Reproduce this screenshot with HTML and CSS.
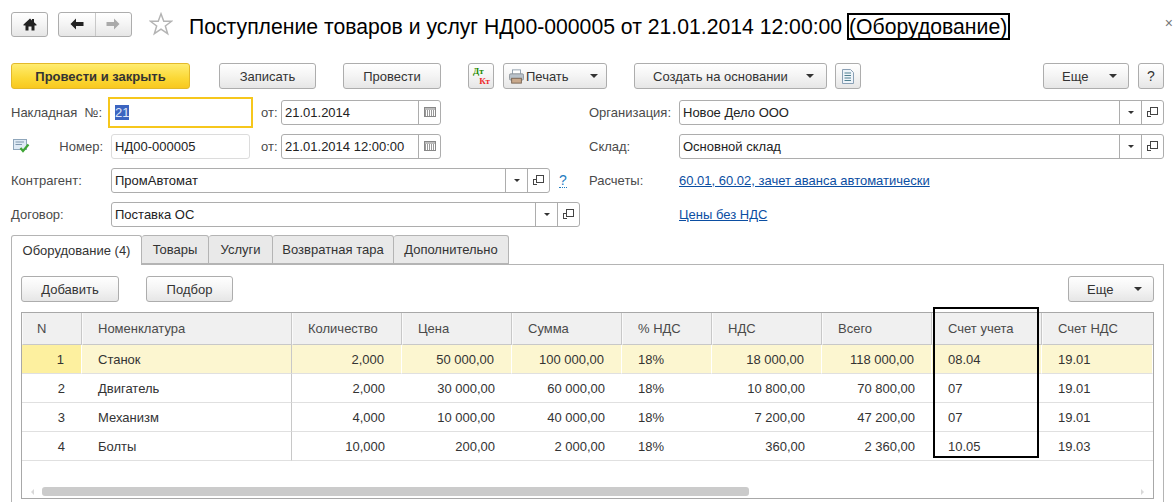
FILE: index.html
```html
<!DOCTYPE html>
<html lang="ru">

<head>
    <meta charset="UTF-8">
    <title>Поступление товаров и услуг</title>
    <link rel="stylesheet" href="styles.css">
</head>

<body>
    <header class="title-bar">
        <button class="btn nav-home">
            <svg width="14" height="13" viewBox="0 0 14 13"><path d="M7 0.5L0.5 6.5V7.5H2.5V12.5H5.5V8.5H8.5V12.5H11.5V7.5H13.5V6.5L11 4.2V1H9V2.4Z" fill="#222"/></svg>
        </button>
        <div class="btn nav-pair">
            <span class="nav-part">
                <svg width="14" height="12" viewBox="0 0 14 12"><path d="M6 0.5L0.5 6L6 11.5V8H13.5V4H6Z" fill="#222"/></svg>
            </span>
            <span class="nav-part nav-next">
                <svg width="14" height="12" viewBox="0 0 14 12"><path d="M8 0.5L13.5 6L8 11.5V8H0.5V4H8Z" fill="#aaa"/></svg>
            </span>
        </div>
        <svg class="star" width="24" height="24" viewBox="0 0 26 26"><path d="M13 2L16 10H24.5L17.7 15.2L20.2 23.5L13 18.5L5.8 23.5L8.3 15.2L1.5 10H10Z" fill="#fff" stroke="#b4b4b4" stroke-width="1.6"/></svg>
        <h1 class="title">Поступление товаров и услуг НД00-000005 от 21.01.2014 12:00:00 <span class="title-mark">(Оборудование)</span></h1>
        <span class="close">×</span>
    </header>

    <div class="toolbar">
        <button class="btn btn-main">Провести и закрыть</button>
        <button class="btn btn-write">Записать</button>
        <button class="btn btn-post">Провести</button>
        <button class="btn btn-dtkt"><span class="dt">Дт</span><span class="kt">Кт</span></button>
        <button class="btn btn-print">
            <svg width="15" height="15" viewBox="0 0 17 16"><rect x="4" y="0.5" width="9" height="5" fill="#fff" stroke="#8a9aa8"/><rect x="0.5" y="5" width="16" height="7" rx="1.5" fill="#b9c2ca" stroke="#8a8f94"/><rect x="3" y="10" width="11" height="5.5" fill="#c9a98c" stroke="#75604f"/></svg>
            <span class="btn-text">Печать</span><i class="arrow"></i>
        </button>
        <button class="btn btn-create">Создать на основании<i class="arrow"></i></button>
        <button class="btn btn-doc">
            <svg width="12" height="15" viewBox="0 0 12 15"><path d="M0.5 0.5H8.5L11.5 3.5V14.5H0.5Z" fill="#eef4fa" stroke="#8aa0b5"/><path d="M2.5 4H9M2.5 6.5H9M2.5 9H9M2.5 11.5H9" stroke="#4f7f8f" stroke-width="1.2"/></svg>
        </button>
        <button class="btn btn-more">Еще<i class="arrow"></i></button>
        <button class="btn btn-help">?</button>
    </div>

    <div class="form">
        <div class="form-row">
            <div class="form-left">
                <label class="label label-inv">Накладная&nbsp; №:</label>
                <span class="field field-active"><span class="selected">21</span></span>
                <label class="label label-from">от:</label>
                <span class="field field-date"><span class="field-text">21.01.2014</span><span class="cell cell-cal"><i class="cal"></i></span></span>
            </div>
            <div class="form-right">
                <label class="label label-right">Организация:</label>
                <span class="field field-wide"><span class="field-text">Новое Дело ООО</span><span class="cell"><i class="arrow arrow-small"></i></span><span class="cell"><i class="open"></i></span></span>
            </div>
        </div>
        <div class="form-row">
            <div class="form-left">
                <svg class="doc-ok" width="17" height="14" viewBox="0 0 17 14"><rect x="0.5" y="0.5" width="13" height="10" fill="#dfeaf5" stroke="#8fa6bb"/><path d="M2.5 3H11M2.5 5.5H9" stroke="#7f97ad"/><path d="M7.5 9L10 12L15.5 5.5" fill="none" stroke="#3fa535" stroke-width="2.2"/></svg>
                <label class="label label-num">Номер:</label>
                <span class="field field-num"><span class="field-text">НД00-000005</span></span>
                <label class="label label-from">от:</label>
                <span class="field field-date"><span class="field-text">21.01.2014 12:00:00</span><span class="cell cell-cal"><i class="cal"></i></span></span>
            </div>
            <div class="form-right">
                <label class="label label-right">Склад:</label>
                <span class="field field-wide"><span class="field-text">Основной склад</span><span class="cell"><i class="arrow arrow-small"></i></span><span class="cell"><i class="open"></i></span></span>
            </div>
        </div>
        <div class="form-row">
            <div class="form-left">
                <label class="label label-long">Контрагент:</label>
                <span class="field field-partner"><span class="field-text">ПромАвтомат</span><span class="cell"><i class="arrow arrow-small"></i></span><span class="cell"><i class="open"></i></span></span>
                <a class="hint">?</a>
            </div>
            <div class="form-right">
                <label class="label label-right">Расчеты:</label>
                <a class="link">60.01, 60.02, зачет аванса автоматически</a>
            </div>
        </div>
        <div class="form-row">
            <div class="form-left">
                <label class="label label-long">Договор:</label>
                <span class="field field-contract"><span class="field-text">Поставка ОС</span><span class="cell"><i class="arrow arrow-small"></i></span><span class="cell"><i class="open"></i></span></span>
            </div>
            <div class="form-right">
                <span class="label label-right"></span>
                <a class="link">Цены без НДС</a>
            </div>
        </div>
    </div>

    <div class="tabs">
        <span class="tab tab-active">Оборудование (4)</span>
        <span class="tab tab-goods">Товары</span>
        <span class="tab tab-serv">Услуги</span>
        <span class="tab tab-tara">Возвратная тара</span>
        <span class="tab tab-extra">Дополнительно</span>
    </div>

    <div class="panel">
        <div class="panel-bar">
            <button class="btn btn-add">Добавить</button>
            <button class="btn btn-pick">Подбор</button>
            <button class="btn btn-more btn-more-table">Еще<i class="arrow"></i></button>
        </div>
        <div class="grid-wrap">
            <table class="grid">
                <colgroup>
                    <col class="c-n"><col class="c-name"><col class="c-110"><col class="c-110"><col class="c-110">
                    <col class="c-vat"><col class="c-110"><col class="c-110"><col class="c-110"><col>
                </colgroup>
                <thead>
                    <tr>
                        <th class="th-n">N</th><th>Номенклатура</th><th>Количество</th><th>Цена</th><th>Сумма</th>
                        <th>% НДС</th><th>НДС</th><th>Всего</th><th>Счет учета</th><th>Счет НДС</th>
                    </tr>
                </thead>
                <tbody>
                    <tr class="row-current">
                        <td class="num-n">1</td><td class="sep">Станок</td><td class="num">2,000</td><td class="num">50 000,00</td><td class="num">100 000,00</td>
                        <td>18%</td><td class="num">18 000,00</td><td class="num">118 000,00</td><td>08.04</td><td>19.01</td>
                    </tr>
                    <tr>
                        <td class="num-n">2</td><td class="sep">Двигатель</td><td class="num">2,000</td><td class="num">30 000,00</td><td class="num">60 000,00</td>
                        <td>18%</td><td class="num">10 800,00</td><td class="num">70 800,00</td><td>07</td><td>19.01</td>
                    </tr>
                    <tr>
                        <td class="num-n">3</td><td class="sep">Механизм</td><td class="num">4,000</td><td class="num">10 000,00</td><td class="num">40 000,00</td>
                        <td>18%</td><td class="num">7 200,00</td><td class="num">47 200,00</td><td>07</td><td>19.01</td>
                    </tr>
                    <tr>
                        <td class="num-n">4</td><td class="sep">Болты</td><td class="num">10,000</td><td class="num">200,00</td><td class="num">2 000,00</td>
                        <td>18%</td><td class="num">360,00</td><td class="num">2 360,00</td><td>10.05</td><td>19.03</td>
                    </tr>
                </tbody>
            </table>
            <div class="scroll">
                <i class="scroll-left"></i>
                <div class="scroll-thumb"></div>
                <i class="scroll-right"></i>
            </div>
            <div class="column-mark"></div>
        </div>
    </div>
</body>

</html>
```

FILE: styles.css
```css
html,
body {
    height: 502px;
    overflow: hidden;
}

body {
    margin: 0;
    background: #fff;
    color: #333;
    font-family: 'Liberation Sans', Arial, sans-serif;
    font-size: 13px;
}

button {
    font-family: inherit;
    font-size: 13px;
    color: #333;
    padding: 0;
}

.btn {
    height: 26px;
    display: flex;
    align-items: center;
    justify-content: center;
    box-sizing: border-box;
    background: linear-gradient(#ffffff 0%, #f4f4f4 50%, #e6e6e6 100%);
    border: 1px solid #adadad;
    border-radius: 3px;
    flex: none;
}

.arrow {
    width: 0;
    height: 0;
    border-left: 4px solid transparent;
    border-right: 4px solid transparent;
    border-top: 4px solid #333;
    display: block;
}

.arrow-small {
    border-left-width: 3.5px;
    border-right-width: 3.5px;
    border-top-width: 3px;
}

/* title */
.title-bar {
    height: 24px;
    padding: 12px 0 0 11px;
    display: flex;
    align-items: center;
    position: relative;
}

.nav-home {
    width: 37px;
    height: 25px;
}

.nav-pair {
    width: 74px;
    height: 25px;
    margin-left: 10px;
}

.nav-part {
    flex: 1;
    height: 100%;
    display: flex;
    align-items: center;
    justify-content: center;
}

.nav-next {
    border-left: 1px solid #c8c8c8;
}

.star {
    margin-left: 17px;
    flex: none;
}

.title {
    margin: 5px 0 0 16px;
    font-size: 21.2px;
    font-weight: normal;
    color: #000;
    white-space: nowrap;
}

.title-mark {
    border: 2px solid #000;
    margin-left: -1px;
    padding: 0 1px 0 0;
}

.close {
    position: absolute;
    right: 1px;
    top: 15px;
    color: #777;
    font-size: 14px;
}

/* toolbar */
.toolbar {
    display: flex;
    align-items: center;
    margin-top: 27px;
    padding-left: 11px;
}

.btn-main {
    width: 179px;
    font-weight: bold;
    border-color: #e3b92b;
    background: linear-gradient(#ffec70 0%, #fbd835 60%, #f8c81f 100%);
}

.btn-write {
    width: 97px;
    margin-left: 29px;
}

.btn-post {
    width: 98px;
    margin-left: 27px;
}

.btn-dtkt {
    width: 26px;
    margin-left: 27px;
    flex-direction: column;
    font-size: 9px;
    font-weight: bold;
    line-height: 10.5px;
    font-family: 'Liberation Serif', serif;
}

.dt {
    color: #1f8a00;
    align-self: flex-start;
    margin-left: 4px;
}

.kt {
    color: #ee2b2b;
    align-self: flex-end;
    margin-right: 3px;
}

.btn-print {
    width: 104px;
    margin-left: 9px;
    justify-content: flex-start;
    padding-left: 5px;
}

.btn-text {
    margin-left: 2px;
}

.btn-print .arrow {
    margin-left: 21px;
}

.btn-create {
    width: 193px;
    margin-left: 27px;
    justify-content: flex-start;
    padding-left: 18px;
}

.btn-create .arrow {
    margin-left: 18px;
}

.btn-doc {
    width: 26px;
    margin-left: 8px;
}

.btn-more {
    width: 86px;
    margin-left: 182px;
    justify-content: flex-start;
    padding-left: 18px;
}

.btn-more .arrow {
    margin-left: 21px;
}

.btn-help {
    width: 26px;
    margin-left: 9px;
    font-size: 14px;
}

/* form */
.form {
    margin-top: 6px;
    padding-left: 11px;
}

.form-row {
    height: 34px;
    display: flex;
    align-items: center;
}

.form-left {
    width: 578px;
    display: flex;
    align-items: center;
    flex: none;
}

.form-right {
    display: flex;
    align-items: center;
}

.label {
    color: #4a4a4a;
    white-space: nowrap;
    flex: none;
}

.label-inv {
    width: 97px;
}

.label-num {
    width: 51px;
    margin-left: 22px;
    text-align: right;
    margin-right: 8px;
}

.doc-ok {
    margin-left: 2px;
    flex: none;
}

.label-long {
    width: 100px;
}

.label-from {
    width: 20px;
    margin-left: 8px;
    margin-right: 0;
}

.label-right {
    width: 90px;
}

.field {
    height: 25px;
    box-sizing: border-box;
    display: flex;
    align-items: center;
    background: #fff;
    border: 1px solid #adadad;
    border-radius: 3px;
    flex: none;
    color: #222;
}

.field-text {
    flex: 1;
    padding-left: 3px;
    white-space: nowrap;
    overflow: hidden;
}

.field-active {
    width: 145px;
    height: 31px;
    border: 2px solid #f6c71c;
    border-radius: 0;
    padding-left: 5px;
}

.selected {
    background: #3c64c0;
    color: #dfe6f7;
    line-height: 15px;
}

.field-date {
    width: 160px;
}

.field-num {
    width: 139px;
    margin-right: 3px;
    border-color: #dcdcdc;
}

.field-wide {
    width: 485px;
}

.field-partner {
    width: 439px;
}

.field-contract {
    width: 469px;
}

.cell {
    width: 21px;
    height: 100%;
    display: flex;
    align-items: center;
    justify-content: center;
    border-left: 1px solid #adadad;
    flex: none;
}

.cal {
    width: 10px;
    height: 8px;
    border: 1px solid #888;
    background: repeating-linear-gradient(90deg, #999 0 1px, #fff 1px 2px);
    box-shadow: inset 0 2px 0 #bbb;
}

.open {
    width: 6px;
    height: 6px;
    border: 1px solid #444;
    display: block;
    position: relative;
    margin: -3px 0 0 3px;
    background: #fff;
}

.open::after {
    content: "";
    position: absolute;
    left: -4px;
    top: 3px;
    width: 3px;
    height: 4px;
    border-left: 1px solid #444;
    border-bottom: 1px solid #444;
    border-top: 1px solid #444;
}

.hint {
    margin-left: 9px;
    color: #1f7cc0;
    font-size: 14px;
    border-bottom: 1px dotted #1f7cc0;
    line-height: 14px;
}

.link {
    color: #0b4ea2;
    text-decoration: underline;
}

/* tabs */
.tabs {
    display: flex;
    height: 29px;
    margin: 4px 0 0 11px;
    align-items: flex-end;
    position: relative;
}

.tab {
    height: 29px;
    box-sizing: border-box;
    display: flex;
    align-items: center;
    justify-content: center;
    background: #e9e9e9;
    border: 1px solid #b4b4b4;
    border-left: none;
    border-radius: 3px 3px 0 0;
}

.tab-active {
    width: 131px;
    background: #fff;
    border-left: 1px solid #b4b4b4;
    border-bottom: none;
    height: 30px;
    margin-bottom: -1px;
    position: relative;
    z-index: 1;
}

.tab-goods {
    width: 67px;
}

.tab-serv {
    width: 64px;
}

.tab-tara {
    width: 121px;
}

.tab-extra {
    width: 115px;
}

/* panel */
.panel {
    width: 1153px;
    height: 240px;
    box-sizing: border-box;
    margin-left: 11px;
    border: 1px solid #b4b4b4;
    padding: 11px 9px 0 9px;
}

.panel-bar {
    display: flex;
    align-items: center;
}

.btn-add {
    width: 98px;
}

.btn-pick {
    width: 87px;
    margin-left: 27px;
}

.btn-more-table {
    margin-left: auto;
}

.grid-wrap {
    position: relative;
    margin-top: 10px;
    height: 187px;
    box-sizing: border-box;
    border: 1px solid #a8a8a8;
    width: 1133px;
}

.grid {
    width: 100%;
    table-layout: fixed;
    border-collapse: separate;
    border-spacing: 0;
}

.c-n {
    width: 60px;
}

.c-name {
    width: 210px;
}

.c-110 {
    width: 110px;
}

.c-vat {
    width: 90px;
}

.grid th {
    height: 32px;
    box-sizing: border-box;
    background: #f0f0f0;
    border-right: 1px solid #c8c8c8;
    border-left: 1px solid #fafafa;
    border-bottom: 1px solid #c8c8c8;
    font-weight: normal;
    text-align: left;
    padding: 0 0 0 15px;
    color: #4a4a4a;
}

.grid th:last-child {
    border-right: none;
}

.grid .th-n {
    padding-left: 14px;
}

.grid td {
    height: 29px;
    box-sizing: border-box;
    border-bottom: 1px solid #e0e0e0;
    padding: 0 0 0 16px;
    color: #333;
    white-space: nowrap;
}

.grid .num {
    text-align: right;
    padding: 0 17px 0 0;
}

.grid .num-n {
    text-align: right;
    padding: 0 17px 0 0;
}

.grid .sep {
    border-right: 1px solid #c8c8c8;
}

.row-current td {
    background: #fcf6d0;
    border-right: 1px solid #fff;
}

.row-current .num-n {
    background: #fdf09f;
}

.scroll {
    position: absolute;
    left: 0;
    right: 0;
    bottom: 2px;
    height: 9px;
    display: flex;
    align-items: center;
}

.scroll-thumb {
    width: 707px;
    height: 9px;
    margin-left: 20px;
    background: #cbcbcb;
    border-radius: 3px;
}

.scroll-left,
.scroll-right {
    position: absolute;
    width: 0;
    height: 0;
    border-top: 3px solid transparent;
    border-bottom: 3px solid transparent;
}

.scroll-left {
    left: 9px;
    border-right: 3px solid #d8d8d8;
}

.scroll-right {
    right: 9px;
    border-left: 3px solid #d8d8d8;
}

.column-mark {
    position: absolute;
    left: 911px;
    top: -6px;
    width: 106px;
    height: 151px;
    border: 2px solid #000;
    box-sizing: border-box;
}
```
